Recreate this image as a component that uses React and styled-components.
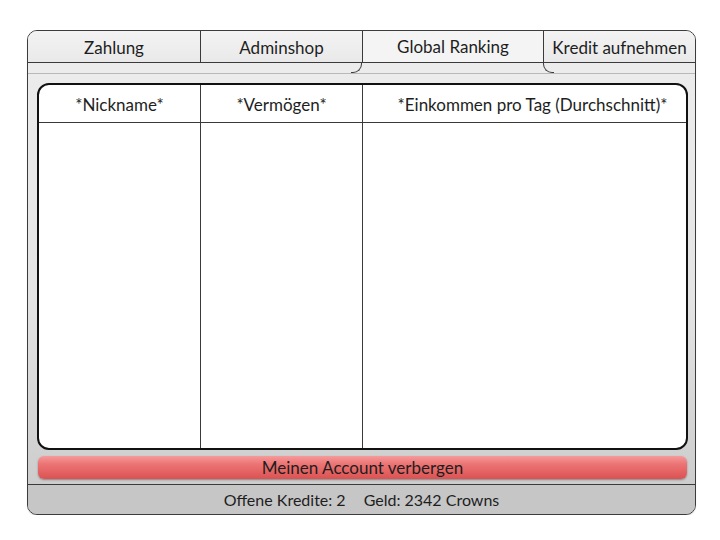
import React from "react";
import styled, { createGlobalStyle } from "styled-components";

const Global = createGlobalStyle`
  html, body { margin: 0; padding: 0; background: #ffffff; }
  body { font-family: Lato, "Open Sans", "Liberation Sans", sans-serif; color: #1e1e1e; }
`;

const Page = styled.div`
  padding: 30px 24px 0 27px;
`;

const Window = styled.div`
  width: 667px;
  height: 483px;
  border: 1px solid #3c3c3c;
  border-radius: 10px;
  display: flex;
  flex-direction: column;
  overflow: hidden;
  background: linear-gradient(#ededed 0%, #e4e4e4 55%, #c9c9c9 100%);
  box-shadow: 0 1px 1px rgba(0, 0, 0, 0.15);
`;

const TabBar = styled.div`
  position: relative;
  z-index: 2;
  display: grid;
  grid-template-columns: 172px 162px 181px 1fr;
  height: 31px;
  border-bottom: 1px solid #3a3a3a;
  background: linear-gradient(#f3f3f3, #e9e9e9);
`;

const Tab = styled.div`
  position: relative;
  display: flex;
  align-items: center;
  justify-content: center;
  font-size: 17px;
  padding-top: ${(p) => (p.$active ? "0" : "1px")};
  padding-bottom: ${(p) => (p.$active ? "1px" : "0")};
  border-left: ${(p) => (p.$first ? "none" : "1px solid #3a3a3a")};
  background: ${(p) => (p.$active ? "#f4f4f4" : "transparent")};
`;

/* flared lower edge of the selected tab, opening into the panel */
const Skirt = styled.div`
  position: absolute;
  top: calc(100% + 1px);
  left: -12px;
  right: -11px;
  height: 10px;
  display: flex;
  background: #ececec;
`;

const Flare = styled.span`
  width: 11px;
  height: 10px;
  box-sizing: border-box;
  border-bottom: 1px solid #3a3a3a;
  ${(p) =>
    p.$side === "left"
      ? `border-right: 1px solid #3a3a3a; border-bottom-right-radius: 9px;`
      : `border-left: 1px solid #3a3a3a; border-bottom-left-radius: 9px;`}
`;

const Gap = styled.span`
  flex: 1;
`;

const Strip = styled.div`
  height: 10px;
  background: #ececec;
  border-bottom: 1px solid #b9b9b9;
`;

const Body = styled.div`
  flex: 1;
  display: flex;
  flex-direction: column;
  gap: 6px;
  padding: 9px 7px 5px 9px;
`;

const Table = styled.div`
  flex: 1;
  display: grid;
  grid-template-columns: 162px 162px 1fr;
  grid-template-rows: 38px 1fr;
  background: #ffffff;
  border: 2px solid #111111;
  border-radius: 12px;
  overflow: hidden;
`;

const HeadCell = styled.div`
  display: flex;
  align-items: center;
  justify-content: center;
  font-size: 17px;
  padding-top: 1px;
  border-bottom: 1px solid #3a3a3a;
  border-right: ${(p) => (p.$last ? "none" : "1px solid #3a3a3a")};
  padding-left: ${(p) => (p.$last ? "16px" : "0")};
`;

const Cell = styled.div`
  border-right: ${(p) => (p.$last ? "none" : "1px solid #3a3a3a")};
`;

const DangerButton = styled.button`
  margin: 0 1px;
  height: 23px;
  flex: none;
  border: none;
  border-radius: 6px;
  background: linear-gradient(#f59a9a 0%, #ec7474 35%, #dc5252 100%);
  box-shadow: 0 1px 2px rgba(0, 0, 0, 0.35);
  font-family: inherit;
  font-size: 17px;
  line-height: 21px;
  color: #1e1e1e;
  padding: 0;
  cursor: pointer;
`;

const StatusBar = styled.div`
  flex: none;
  box-sizing: border-box;
  height: 30px;
  border-top: 1px solid #3a3a3a;
  background: #c6c6c6;
  display: flex;
  align-items: center;
  justify-content: center;
  gap: 18px;
  font-size: 16px;
`;

const tabs = ["Zahlung", "Adminshop", "Global Ranking", "Kredit aufnehmen"];
const columns = ["*Nickname*", "*Vermögen*", "*Einkommen pro Tag (Durchschnitt)*"];

export default function App() {
  const active = 2;
  return (
    <>
      <Global />
      <Page>
        <Window>
          <TabBar>
            {tabs.map((t, i) => (
              <Tab key={t} $first={i === 0} $active={i === active}>
                {t}
                {i === active && (
                  <Skirt>
                    <Flare $side="left" />
                    <Gap />
                    <Flare $side="right" />
                  </Skirt>
                )}
              </Tab>
            ))}
          </TabBar>
          <Strip />
          <Body>
            <Table>
              {columns.map((c, i) => (
                <HeadCell key={c} $last={i === columns.length - 1}>
                  {c}
                </HeadCell>
              ))}
              {columns.map((c, i) => (
                <Cell key={c + "-body"} $last={i === columns.length - 1} />
              ))}
            </Table>
            <DangerButton>Meinen Account verbergen</DangerButton>
          </Body>
          <StatusBar>
            <span>Offene Kredite: 2</span>
            <span>Geld: 2342 Crowns</span>
          </StatusBar>
        </Window>
      </Page>
    </>
  );
}
